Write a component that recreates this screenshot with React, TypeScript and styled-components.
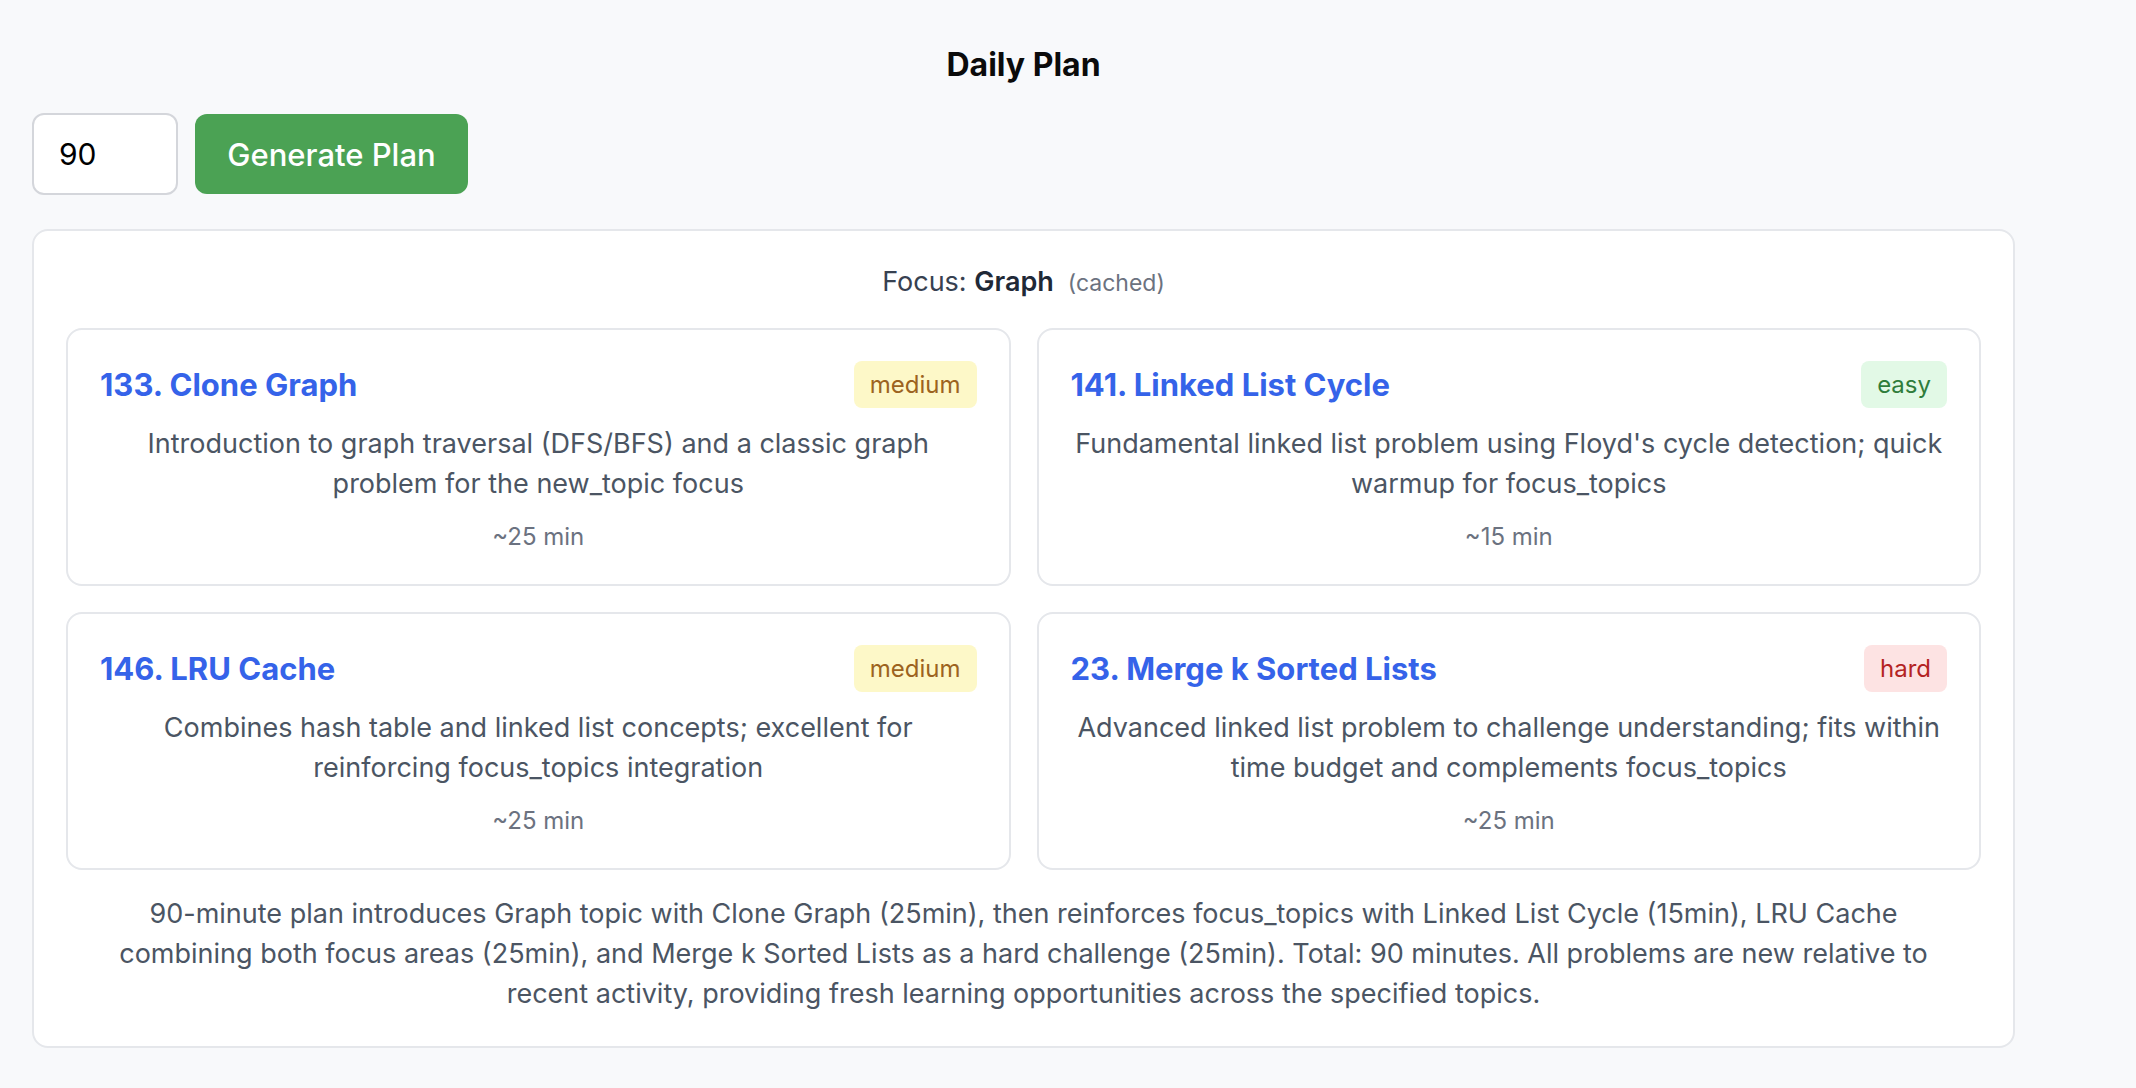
import React from "react";
import styled, { createGlobalStyle } from "styled-components";

const GlobalStyle = createGlobalStyle`
  html, body {
    margin: 0;
    padding: 0;
    background: #f8f9fb;
  }
  body {
    font-family: "Inter", "Noto Sans", sans-serif;
    color: #111827;
    -webkit-font-smoothing: antialiased;
  }
  * { box-sizing: border-box; }
`;

const Page = styled.div`
  padding: 45px 0 40px 32px;
  min-height: 1088px;
`;

const Container = styled.div`
  width: 1983px;
  display: flex;
  flex-direction: column;
`;

const Title = styled.h2`
  margin: 0;
  text-align: center;
  font-size: 32px;
  line-height: 39px;
  font-weight: 700;
  color: #0b0b0b;
`;

const Controls = styled.div`
  display: flex;
  align-items: center;
  gap: 17px;
  margin-top: 29px;
`;

const MinutesInput = styled.input`
  width: 146px;
  height: 82px;
  border: 2px solid #d4d6db;
  border-radius: 12px;
  background: #ffffff;
  padding: 0 0 0 25px;
  font-family: "Inter", sans-serif;
  font-size: 30px;
  color: #000000;
  outline: none;
  -moz-appearance: textfield;
  &::-webkit-outer-spin-button,
  &::-webkit-inner-spin-button {
    -webkit-appearance: none;
    margin: 0;
  }
`;

const GenerateButton = styled.button`
  height: 80px;
  width: 273px;
  border: none;
  border-radius: 12px;
  background: #4ba254;
  color: #ffffff;
  font-family: "Inter", sans-serif;
  font-size: 31px;
  font-weight: 500;
  cursor: pointer;
`;

const Panel = styled.section`
  margin-top: 34px;
  background: #ffffff;
  border: 2px solid #e5e7eb;
  border-radius: 16px;
  padding: 32px;
  display: flex;
  flex-direction: column;
`;

const FocusLine = styled.div`
  text-align: center;
  font-size: 27px;
  line-height: 34px;
  color: #374151;
  margin: 2px 0 28px;
`;

const FocusTopic = styled.strong`
  font-weight: 600;
  color: #1f2937;
`;

const Cached = styled.span`
  margin-left: 14px;
  font-size: 23px;
  color: #6b7280;
`;

const Grid = styled.div`
  display: grid;
  grid-template-columns: 1fr 1fr;
  gap: 26px;
`;

const Card = styled.article`
  border: 2px solid #e5e7eb;
  border-radius: 16px;
  padding: 31px 32px 32px;
  display: flex;
  flex-direction: column;
  min-height: 258px;
`;

const CardHeader = styled.div`
  display: flex;
  align-items: center;
  justify-content: space-between;
`;

const ProblemLink = styled.a`
  font-size: 31px;
  font-weight: 700;
  color: #3563e9;
  text-decoration: none;
`;

type Difficulty = "easy" | "medium" | "hard";

const badgeColors: Record<Difficulty, { bg: string; fg: string }> = {
  easy: { bg: "#e2f9e6", fg: "#2f7d3b" },
  medium: { bg: "#fdf8c8", fg: "#9c6320" },
  hard: { bg: "#fde3e3", fg: "#b42323" },
};

const Badge = styled.span<{ $level: Difficulty }>`
  display: inline-block;
  padding: 8px 16px;
  border-radius: 8px;
  font-size: 24px;
  line-height: 31px;
  background: ${(p) => badgeColors[p.$level].bg};
  color: ${(p) => badgeColors[p.$level].fg};
`;

const Description = styled.p`
  margin: 16px 0 0;
  text-align: center;
  font-size: 27px;
  line-height: 40px;
  color: #4b5563;
`;

const Duration = styled.div`
  margin-top: 18px;
  text-align: center;
  font-size: 24px;
  line-height: 29px;
  color: #6b7280;
`;

const Summary = styled.p`
  margin: 24px 0 0;
  padding: 0 20px;
  text-align: center;
  font-size: 27px;
  line-height: 40px;
  color: #4b5563;
`;

const problems: {
  id: number;
  title: string;
  level: Difficulty;
  reason: string;
  minutes: number;
}[] = [
  {
    id: 133,
    title: "Clone Graph",
    level: "medium",
    reason:
      "Introduction to graph traversal (DFS/BFS) and a classic graph problem for the new_topic focus",
    minutes: 25,
  },
  {
    id: 141,
    title: "Linked List Cycle",
    level: "easy",
    reason:
      "Fundamental linked list problem using Floyd's cycle detection; quick warmup for focus_topics",
    minutes: 15,
  },
  {
    id: 146,
    title: "LRU Cache",
    level: "medium",
    reason:
      "Combines hash table and linked list concepts; excellent for reinforcing focus_topics integration",
    minutes: 25,
  },
  {
    id: 23,
    title: "Merge k Sorted Lists",
    level: "hard",
    reason:
      "Advanced linked list problem to challenge understanding; fits within time budget and complements focus_topics",
    minutes: 25,
  },
];

export default function App() {
  return (
    <>
      <GlobalStyle />
      <Page>
        <Container>
          <Title>Daily Plan</Title>
          <Controls>
            <MinutesInput type="number" defaultValue={90} />
            <GenerateButton>Generate Plan</GenerateButton>
          </Controls>
          <Panel>
            <FocusLine>
              Focus: <FocusTopic>Graph</FocusTopic>
              <Cached>(cached)</Cached>
            </FocusLine>
            <Grid>
              {problems.map((p) => (
                <Card key={p.id}>
                  <CardHeader>
                    <ProblemLink href="#">
                      {p.id}. {p.title}
                    </ProblemLink>
                    <Badge $level={p.level}>{p.level}</Badge>
                  </CardHeader>
                  <Description>{p.reason}</Description>
                  <Duration>~{p.minutes} min</Duration>
                </Card>
              ))}
            </Grid>
            <Summary>
              90-minute plan introduces Graph topic with Clone Graph (25min), then
              reinforces focus_topics with Linked List Cycle (15min), LRU Cache
              combining both focus areas (25min), and Merge k Sorted Lists as a
              hard challenge (25min). Total: 90 minutes. All problems are new
              relative to recent activity, providing fresh learning opportunities
              across the specified topics.
            </Summary>
          </Panel>
        </Container>
      </Page>
    </>
  );
}
